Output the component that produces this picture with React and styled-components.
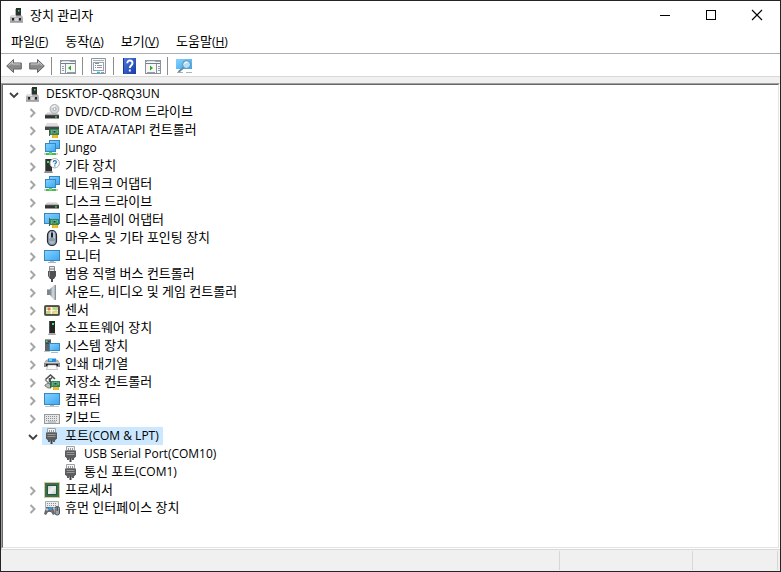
import React, { useState } from 'react';
import styled, { createGlobalStyle } from 'styled-components';

const GlobalStyle = createGlobalStyle`
  * { box-sizing: border-box; }
  body { margin: 0; background: #fff; }
  button { font: inherit; color: inherit; border: 0; padding: 0; background: none; }
`;

const Window = styled.div`
  display: flex;
  flex-direction: column;
  min-height: 100vh;
  border: 1px solid #252325;
  background: #fff;
  color: #000;
  font: 400 13px/18px 'Open Sans', 'Noto Sans CJK KR', sans-serif;
`;

const TitleBar = styled.header`
  display: flex;
  align-items: center;
  height: 30px;
  padding: 0 0 2px 8px;
`;

const Title = styled.h1`
  flex: 1;
  margin: 0 0 0 5px;
  font-size: 13px;
  line-height: 18px;
  font-weight: inherit;
`;

const WindowButton = styled.button`
  display: flex;
  align-items: center;
  justify-content: center;
  width: 46px;
  height: 28px;
  &:hover { background: #e5e5e5; }
`;

const MenuBar = styled.nav`
  display: flex;
  gap: 1px;
  height: 23px;
  padding-left: 2px;
  border-bottom: 1px solid #a9adb4;
`;

const MenuButton = styled.button`
  height: 20px;
  padding: 0 8px;
  white-space: nowrap;
  &:hover { background: #e5f3ff; }
`;

const Latin = styled.span`
  font-size: 12px;
`;

const ToolBar = styled.div`
  display: flex;
  align-items: center;
  height: 23px;
  padding: 2px 0 0 1px;
  border-bottom: 1px solid #d9d9d9;
`;

const ToolButton = styled.button`
  display: flex;
  align-items: center;
  justify-content: center;
  width: 23px;
  height: 20px;
  &:hover { background: #e5f3ff; }
`;

const Separator = styled.span`
  width: 1px;
  height: 18px;
  margin: 0 4px 0 3px;
  background: #8d8d8d;
`;

const Content = styled.main`
  display: flex;
  flex: 1;
  padding-top: 6px;
  background: #f0f0f0;
`;

const TreeFrame = styled.div`
  display: flex;
  flex: 1;
  border: 1px solid;
  border-color: #a0a0a0 #fff #fff #a0a0a0;
`;

const Tree = styled.ul`
  flex: 1;
  margin: 0;
  padding: 0;
  list-style: none;
  background: #fff;
  border: 1px solid;
  border-color: #696969 #e3e3e3 #e3e3e3 #696969;
`;

const Row = styled.li`
  display: flex;
  height: 18px;
  padding-left: ${({ $level }) => 1 + $level * 19}px;
`;

const Expander = styled.button`
  display: flex;
  align-items: center;
  justify-content: center;
  flex: none;
  width: 19px;
  height: 18px;
  padding-top: 2px;
`;

const ExpanderSpace = styled.span`
  flex: none;
  width: 19px;
`;

const Item = styled.button`
  display: flex;
  align-items: center;
  gap: 5px;
  height: 18px;
  padding: 0 4px 0 2px;
  white-space: nowrap;
  line-height: 16px;
  background: ${({ $selected }) => ($selected ? '#cce8ff' : 'transparent')};
`;

const ItemText = styled.span`
  height: 18px;
  white-space: pre;
`;

const StatusBar = styled.footer`
  display: flex;
  height: 22px;
  padding: 1px 2px 1px 0;
  border-top: 1px solid #d7d7d7;
  background: #f0f0f0;
`;

const StatusPane = styled.div`
  flex: ${({ $width }) => ($width ? `0 0 ${$width}px` : '1')};
  border-right: 1px solid #d7d7d7;
`;

const Svg = styled.svg`
  display: block;
  flex: none;
`;

const Icon = ({ children, w = 16, h = 16 }) => (
  <Svg width={w} height={h} viewBox={`0 0 ${w} ${h}`} aria-hidden="true">{children}</Svg>
);

const Gradients = () => (
  <Svg width="0" height="0" aria-hidden="true">
    <defs>
      <linearGradient id="screen" x1="0" y1="0" x2="1" y2="1">
        <stop offset="0" stopColor="#86d3ff" />
        <stop offset="1" stopColor="#3ba6f2" />
      </linearGradient>
      <linearGradient id="metal" x1="0" y1="0" x2="0" y2="1">
        <stop offset="0" stopColor="#ececec" />
        <stop offset="1" stopColor="#bdbdbd" />
      </linearGradient>
      <linearGradient id="arrow" x1="0" y1="0" x2="0" y2="1">
        <stop offset="0" stopColor="#c4c4c4" />
        <stop offset="0.55" stopColor="#858585" />
        <stop offset="1" stopColor="#a5a5a5" />
      </linearGradient>
      <linearGradient id="help" x1="0" y1="0" x2="1" y2="1">
        <stop offset="0" stopColor="#4d7ce0" />
        <stop offset="1" stopColor="#1a3aa6" />
      </linearGradient>
      <linearGradient id="speaker" x1="0" y1="0" x2="1" y2="0">
        <stop offset="0" stopColor="#7c868e" />
        <stop offset="0.5" stopColor="#d5dce1" />
        <stop offset="1" stopColor="#8f9aa3" />
      </linearGradient>
      <linearGradient id="die" x1="0" y1="0" x2="1" y2="1">
        <stop offset="0" stopColor="#c9cdcb" />
        <stop offset="0.5" stopColor="#eef0ef" />
        <stop offset="1" stopColor="#c0c4c2" />
      </linearGradient>
    </defs>
  </Svg>
);

const Screen = ({ x, y, w, h }) => (
  <rect x={x + 0.5} y={y + 0.5} width={w - 1} height={h - 1} fill="url(#screen)" stroke="#3587bd" />
);

const Card = () => (
  <g>
    <path d="M6 7h9v6H6z" fill="#2c8557" />
    <path d="M5.500 6v8" stroke="#4c5a55" />
    <path d="M8 13h6v3H8z" fill="#e9ae1d" />
    <path d="M10 13v3M12 13v3" stroke="#f9dc6c" strokeWidth=".6" />
    <rect x="9" y="8.500" width="3" height="2.500" fill="#174632" stroke="#8fc6a4" strokeWidth=".7" />
    <path d="M7.500 8v4M13.500 8v3" stroke="#6bc08a" strokeWidth=".8" />
  </g>
);

const Drive = () => (
  <g>
    <path d="M3.500 7h9l2.500 3H1z" fill="url(#metal)" />
    <path d="M1 10h14v3.500H1z" fill="#333" />
    <path d="M1 10h14" stroke="#858585" strokeWidth=".6" />
    <rect x="11" y="11.300" width="2" height="1.200" fill="#45e65c" />
  </g>
);

const Manager = () => (
  <Icon>
    <path d="M6 2l5-1v9H6z" fill="#aeb2b4" />
    <path d="M7 1h5v9H7z" fill="#2d302f" />
    <rect x="9" y="3" width="1.500" height="1.500" fill="#2cf062" />
    <path d="M2 8.500h11l1 2v5H1v-5z" fill="#b3b3b6" />
    <path d="M2.500 8.500h4.500v1.500H2z" fill="#e4e4e6" />
    <path d="M1 15h13" stroke="#8b8b8e" />
    <path d="M3 11h2v2.500H3zM10 11h2v2.500h-2z" fill="#242426" />
    <path d="M6 11h3v3H6z" fill="#d4d4d7" />
  </Icon>
);

const Dvd = () => (
  <Icon>
    <g transform="translate(0 1)"><Drive /></g>
    <circle cx="10.500" cy="5" r="4.500" fill="#d5d8da" stroke="#9fa5a8" strokeWidth=".8" />
    <path d="M7.500 3l3 2 1-4" fill="#f8fafb" />
    <circle cx="10.500" cy="5" r="1.500" fill="#fff" stroke="#8e9598" strokeWidth=".8" />
  </Icon>
);

const Ide = () => (
  <Icon>
    <path d="M3 1h10l2 3H1z" fill="#dedede" />
    <path d="M1 4h14v4H1z" fill="#454748" />
    <path d="M1 4.500h14" stroke="#9da1a2" />
    <Card />
  </Icon>
);

const Network = () => (
  <Icon>
    <Screen x={5} y={0} w={11} h={9} />
    <Screen x={1} y={3} w={11} h={9} />
    <path d="M5 12h3v2H5z" fill="#4aba52" />
    <path d="M0 14h14" stroke="#ccd3cd" strokeWidth="2" />
    <path d="M2 14h10" stroke="#43bd50" strokeWidth="2" />
    <path d="M5 13.500h3" stroke="#75dc7b" strokeWidth="2" />
  </Icon>
);

const Other = () => (
  <Icon>
    <path d="M1 1h7v12H1z" fill="#2e302f" />
    <path d="M1 13h7l1 2H0z" fill="#8b8c8d" />
    <path d="M1.500 1v12" stroke="#929494" strokeWidth=".6" />
    <path d="M3 3h2v2H3z" fill="#37e65a" />
    <circle cx="10.700" cy="5.200" r="4.700" fill="#fff" stroke="#a3adb3" />
    <path d="M9.200 4.200c0-2 3.200-2 3.200 0 0 1.100-1.600 1.200-1.600 2.300M10.800 7.200v1.200" fill="none" stroke="#2376b6" strokeWidth="1.200" />
  </Icon>
);

const Disk = () => (
  <Icon><g transform="translate(0 1)"><Drive /></g></Icon>
);

const Display = () => (
  <Icon>
    <Screen x={0} y={1} w={16} h={11} />
    <Card />
  </Icon>
);

const Mouse = () => (
  <Icon>
    <rect x="3.500" y=".500" width="9" height="15" rx="4.500" fill="#8d9bab" stroke="#252b32" strokeWidth="1.200" />
    <path d="M5 5c0-3 1.500-3.500 2-3.500v6L5 9zM11 5c0-3-1.500-3.500-2-3.500v6L11 9z" fill="#bac7d5" />
    <path d="M5 10c1 2 5 2 6 0 0 5-6 5-6 0z" fill="#b1bfce" />
    <rect x="7" y="2.500" width="2" height="5" rx="1" fill="#1a2027" />
  </Icon>
);

const Monitor = () => (
  <Icon>
    <Screen x={0} y={2} w={16} h={11} />
    <path d="M6 13h4v1H6z" fill="#b3bcc2" />
    <path d="M4 14.500h8" stroke="#a9b4bb" />
  </Icon>
);

const Usb = () => (
  <Icon>
    <path d="M5.500.500h5v5h-5z" fill="#e9eaea" stroke="#85888a" />
    <path d="M6.500 2h1v2h-1zM8.500 2h1v2h-1z" fill="#77797b" />
    <path d="M4 5h8v5l-2 3H6l-2-3z" fill="#4f5152" />
    <path d="M5.500 5.500v5" stroke="#8f9192" />
    <path d="M8 12v4" stroke="#4a4c4d" strokeWidth="2" />
  </Icon>
);

const Sound = () => (
  <Icon>
    <path d="M3 5h4v6H3z" fill="#7b868f" />
    <path d="M6 5l4-4h2v15h-2l-4-5z" fill="url(#speaker)" />
    <path d="M11.500 1v14.500" stroke="#87939c" />
    <path d="M3 5.500h3" stroke="#b4bdc4" />
  </Icon>
);

const Sensor = () => (
  <Icon>
    <rect x=".500" y="3.500" width="15" height="10" rx="1" fill="#4b4e49" stroke="#5c5e59" />
    <path d="M2 5h12v7H2z" fill="#e3e197" />
    <path d="M9 5h5v3H9zM2 9h4v3H2z" fill="#bfd68a" />
    <path d="M2 8.500h12M7.500 5v7" stroke="#fffbe0" />
    <path d="M9 12c0-3 1-3 4-3" fill="none" stroke="#d2c577" />
    <circle cx="5" cy="7" r="1.500" fill="#ef6b62" />
  </Icon>
);

const Software = () => (
  <Icon>
    <path d="M5 1h6v12H5z" fill="#242625" />
    <path d="M5.500 1v12" stroke="#4d504f" />
    <path d="M8 3h2v2H8z" fill="#30ee55" />
    <path d="M5 13h6l1 2H4z" fill="#a6a8a8" />
  </Icon>
);

const System = () => (
  <Icon>
    <path d="M1 1h6v12H1z" fill="#5f6566" />
    <path d="M2 3.500h4M2 5.500h4" stroke="#3d4243" />
    <path d="M1 1.500h6" stroke="#969c9d" />
    <rect x="2" y="2.500" width="1.500" height="1.500" fill="#43e361" />
    <Screen x={5} y={5} w={11} h={8} />
    <path d="M0 13.500h6" stroke="#bac5cc" />
    <path d="M7 14.500h7" stroke="#a9b8c2" />
  </Icon>
);

const Printer = () => (
  <Icon>
    <path d="M1 5l2-1.500h10L15 5v1H1z" fill="#a9aeb1" />
    <path d="M4 2.500h8V6H4z" fill="#2d86dc" />
    <path d="M5 3h3v2H5z" fill="#5be0d0" />
    <path d="M0 6h16v5H0z" fill="#85898c" />
    <path d="M0 6.500h16" stroke="#d0d3d5" />
    <path d="M2 8h12v2H2z" fill="#1f2021" />
    <path d="M4 9h8l1.500 4.500h-11z" fill="#fafafa" stroke="#a2a5a6" strokeWidth=".6" />
  </Icon>
);

const Storage = () => (
  <Icon>
    <path d="M1.500 5.500l5-4.500 4.500 4M6 5.500l2-2M5.500 4v3.500l3 .500" fill="none" stroke="#4f5354" strokeWidth="1.600" />
    <path d="M1 5.500l4.500 4.500 4-3" fill="none" stroke="#85898a" strokeWidth="1.400" />
    <path d="M1 11l3-2 3 2v3H4l-3-2z" fill="#babdbd" stroke="#636868" strokeWidth=".8" />
    <g transform="translate(1 0)"><Card /></g>
  </Icon>
);

const Computer = () => (
  <Icon>
    <Screen x={0} y={1} w={16} h={12} />
    <path d="M6 13h4v1H6z" fill="#aab4bc" />
    <path d="M1 14.500h14" stroke="#b9c4cb" />
  </Icon>
);

const Keyboard = () => (
  <Icon>
    <rect x=".500" y="4.500" width="15" height="9" fill="#e4e6e7" stroke="#95999c" />
    <path d="M2 6.500h12M2 8.500h12M2 10.500h12" stroke="#8b9094" strokeDasharray="1 1" />
    <path d="M4 12h8" stroke="#9ca3a7" />
  </Icon>
);

const Port = () => (
  <Icon>
    <path d="M3.500.500h8v4h-8z" fill="#f4f4f4" stroke="#a0a2a3" />
    <path d="M5 2h1v2H5zM7 2h1v2H7zM9 2h1v2H9z" fill="#999" />
    <path d="M2 4.500h11v6l-2 2H4l-2-2z" fill="#5a5c5d" />
    <path d="M3.500 6.500h8M3.500 8.500h8" stroke="#96989a" />
    <path d="M5 12v2M10 12v2" stroke="#5a5c5d" strokeWidth="2" />
    <path d="M7.500 12v4" stroke="#3f4142" strokeWidth="2" />
  </Icon>
);

const Processor = () => (
  <Icon>
    <rect x=".500" y=".500" width="15" height="15" fill="none" stroke="#b5903f" strokeDasharray="1 1" />
    <rect x="1" y="1" width="14" height="14" fill="#37714f" />
    <rect x="3.500" y="3.500" width="9" height="9" fill="url(#die)" stroke="#28553c" />
  </Icon>
);

const Hid = () => (
  <Icon>
    <path d="M1.500 1.500h13v6h-13z" fill="#eceded" stroke="#a8adb0" />
    <path d="M3 3.500h10M3 5.500h10" stroke="#8c9295" strokeDasharray="1 1" />
    <path d="M2 7h7l2 7-2 1-2-3H4l-2 3-2-1z" fill="#626b72" />
    <path d="M3 8v3M1.500 9.500h3" stroke="#c5ccd1" />
    <circle cx="6.500" cy="8.500" r="1.700" fill="#2f9de7" />
    <circle cx="8" cy="11" r=".800" fill="#e1584f" />
    <rect x="11" y="6.500" width="4.500" height="8.500" rx="2" fill="#98a2ab" stroke="#4b5257" />
    <path d="M13.200 7v4" stroke="#30373c" />
  </Icon>
);

const BackArrow = () => (
  <Icon>
    <path d="M.700 8L7.500 1.500V5h7.800v6H7.500v3.500z" fill="url(#arrow)" stroke="#636363" />
    <path d="M2.500 7.500l4-3.700V6h7.700" fill="none" stroke="#d0d0d0" strokeWidth=".8" />
  </Icon>
);

const ForwardArrow = () => (
  <Icon>
    <path d="M15.300 8L8.500 1.500V5H.700v6h7.800v3.500z" fill="url(#arrow)" stroke="#636363" />
    <path d="M1.800 6h7.700V3.800l4 3.700" fill="none" stroke="#d0d0d0" strokeWidth=".8" />
  </Icon>
);

const Pane = ({ right }) => (
  <Icon>
    <rect x=".500" y="2.500" width="15" height="13" fill="#f7f7f7" stroke="#8b939d" />
    <path d="M1 3.500h14" stroke="#9ba4ae" />
    <path d="M2 3.500h8" stroke="#dde1e5" />
    <path d="M1 5.500h14" stroke="#737e8b" />
    <path d={right ? 'M11.500 6v9' : 'M5.500 6v9'} stroke="#8993a0" />
    <path d={right ? 'M13 8.500h2M13 10.500h2M13 12.500h2M2 14.500h8' : 'M2 8.500h2M2 10.500h2M2 12.500h2M7 14.500h8'} stroke="#939da9" />
    <path d={right ? 'M5 7.500v5l3-2.500z' : 'M11 7.500v5L8 10z'} fill="#28a928" />
  </Icon>
);

const Properties = () => (
  <Icon>
    <path d="M.500.500h14v15H.500z" fill="#f8f8f8" stroke="#8e959e" />
    <path d="M2 2.500h11" stroke="#a7afb8" />
    <rect x="2.500" y="4.500" width="10" height="8" fill="#fff" stroke="#99a2ad" />
    <path d="M4 5.500h4M4 9.500h1M6 7.500h5M6 9.500h5" stroke="#8994a0" />
    <path d="M4 7.500h1" stroke="#36a6ed" />
    <path d="M6 14.500h3" stroke="#29b7ef" strokeWidth="1.500" />
    <path d="M10 14.500h3" stroke="#909ba7" />
  </Icon>
);

const Help = () => (
  <Icon>
    <rect x="1" y="0" width="13" height="16" fill="url(#help)" />
    <path d="M1.500 0v16" stroke="#173b91" />
    <path d="M5.300 5.200C5.300 1.500 10.500 1.800 10.500 5c0 2.500-2.700 2.500-2.700 5M7.800 11.500v2" fill="none" stroke="#fff" strokeWidth="1.900" />
  </Icon>
);

const Scan = () => (
  <Icon>
    <path d="M0 1h16v10H0z" fill="url(#screen)" />
    <path d="M1 14.500h6M10 14.500h6" stroke="#a5b4be" />
    <path d="M7.500 9.500L2.500 14" stroke="#6b8ba3" strokeWidth="2" />
    <circle cx="10.500" cy="6.500" r="4" fill="#b3e0f9" stroke="#648aa4" />
    <path d="M8.500 6c.500-1.500 2-2 3-1.500" fill="none" stroke="#fff" />
  </Icon>
);

const Chevron = ({ open }) => (
  <Icon w={10} h={10}>
    <path
      d={open ? 'M1 3l4 4 4-4' : 'M2.500 1l4 4-4 4'}
      fill="none"
      stroke={open ? '#404040' : '#a6a6a6'}
      strokeWidth={open ? 1.8 : 2}
    />
  </Icon>
);

const Minimize = () => (
  <Icon w={12} h={12}><path d="M1 6.500h10" stroke="#000" /></Icon>
);
const Maximize = () => (
  <Icon w={12} h={12}><rect x="1.500" y="1.500" width="9" height="9" fill="none" stroke="#000" /></Icon>
);
const Close = () => (
  <Icon w={12} h={12}><path d="M1 1l10 10M11 1L1 11" stroke="#000" strokeWidth="1.100" /></Icon>
);

const MixedText = ({ children }) =>
  children.split(/([!-~]+(?: [!-~]+)*)/).map((run, i) => (i % 2 ? <Latin key={i}>{run}</Latin> : run));

const menus = [
  ['파일', 'F'],
  ['동작', 'A'],
  ['보기', 'V'],
  ['도움말', 'H'],
];

const tools = [
  [['뒤로', <BackArrow />], ['앞으로', <ForwardArrow />]],
  [['콘솔 트리 표시/숨기기', <Pane />]],
  [['속성', <Properties />]],
  [['도움말', <Help />], ['작업 창 표시/숨기기', <Pane right />]],
  [['하드웨어 변경 사항 검색', <Scan />]],
];

const devices = [
  { name: 'DVD/CD-ROM 드라이브', icon: Dvd },
  { name: 'IDE ATA/ATAPI 컨트롤러', icon: Ide },
  { name: 'Jungo', icon: Network },
  { name: '기타 장치', icon: Other },
  { name: '네트워크 어댑터', icon: Network },
  { name: '디스크 드라이브', icon: Disk },
  { name: '디스플레이 어댑터', icon: Display },
  { name: '마우스 및 기타 포인팅 장치', icon: Mouse },
  { name: '모니터', icon: Monitor },
  { name: '범용 직렬 버스 컨트롤러', icon: Usb },
  { name: '사운드, 비디오 및 게임 컨트롤러', icon: Sound },
  { name: '센서', icon: Sensor },
  { name: '소프트웨어 장치', icon: Software },
  { name: '시스템 장치', icon: System },
  { name: '인쇄 대기열', icon: Printer },
  { name: '저장소 컨트롤러', icon: Storage },
  { name: '컴퓨터', icon: Computer },
  { name: '키보드', icon: Keyboard },
  { name: '포트(COM & LPT)', icon: Port, children: ['USB Serial Port(COM10)', '통신 포트(COM1)'] },
  { name: '프로세서', icon: Processor },
  { name: '휴먼 인터페이스 장치', icon: Hid },
];

function TreeRow({ level, name, icon: Glyph, open, onToggle, selected, onSelect }) {
  return (
    <Row $level={level} role="treeitem" aria-level={level + 1} aria-expanded={open} aria-selected={selected}>
      {onToggle ? (
        <Expander onClick={onToggle} aria-label={name}><Chevron open={open} /></Expander>
      ) : (
        <ExpanderSpace />
      )}
      <Item $selected={selected} onClick={onSelect}>
        <Glyph />
        <ItemText><MixedText>{name}</MixedText></ItemText>
      </Item>
    </Row>
  );
}

export default function App() {
  const root = 'DESKTOP-Q8RQ3UN';
  const [open, setOpen] = useState({ [root]: true, '포트(COM & LPT)': true });
  const [selected, setSelected] = useState('포트(COM & LPT)');
  const rowProps = (name) => ({
    name,
    selected: selected === name,
    onSelect: () => setSelected(name),
  });
  const toggleProps = (name) => ({
    open: !!open[name],
    onToggle: () => setOpen((o) => ({ ...o, [name]: !o[name] })),
  });

  return (
    <Window>
      <GlobalStyle />
      <TitleBar>
        <Gradients />
        <Manager />
        <Title>장치 관리자</Title>
        <WindowButton aria-label="최소화"><Minimize /></WindowButton>
        <WindowButton aria-label="최대화"><Maximize /></WindowButton>
        <WindowButton aria-label="닫기"><Close /></WindowButton>
      </TitleBar>
      <MenuBar>
        {menus.map(([label, key]) => (
          <MenuButton key={key}>{label}<Latin>(<u>{key}</u>)</Latin></MenuButton>
        ))}
      </MenuBar>
      <ToolBar role="toolbar">
        {tools.map((group, i) => (
          <React.Fragment key={i}>
            {i > 0 && <Separator />}
            {group.map(([label, icon]) => (
              <ToolButton key={label} aria-label={label}>{icon}</ToolButton>
            ))}
          </React.Fragment>
        ))}
      </ToolBar>
      <Content>
        <TreeFrame>
          <Tree role="tree">
            <TreeRow level={0} icon={Manager} {...rowProps(root)} {...toggleProps(root)} />
            {open[root] && devices.map(({ name, icon, children = [] }) => (
              <React.Fragment key={name}>
                <TreeRow level={1} icon={icon} {...rowProps(name)} {...toggleProps(name)} />
                {open[name] && children.map((child) => (
                  <TreeRow key={child} level={2} icon={icon} {...rowProps(child)} />
                ))}
              </React.Fragment>
            ))}
          </Tree>
        </TreeFrame>
      </Content>
      <StatusBar>
        <StatusPane />
        <StatusPane $width={133} />
        <StatusPane $width={85} />
      </StatusBar>
    </Window>
  );
}
